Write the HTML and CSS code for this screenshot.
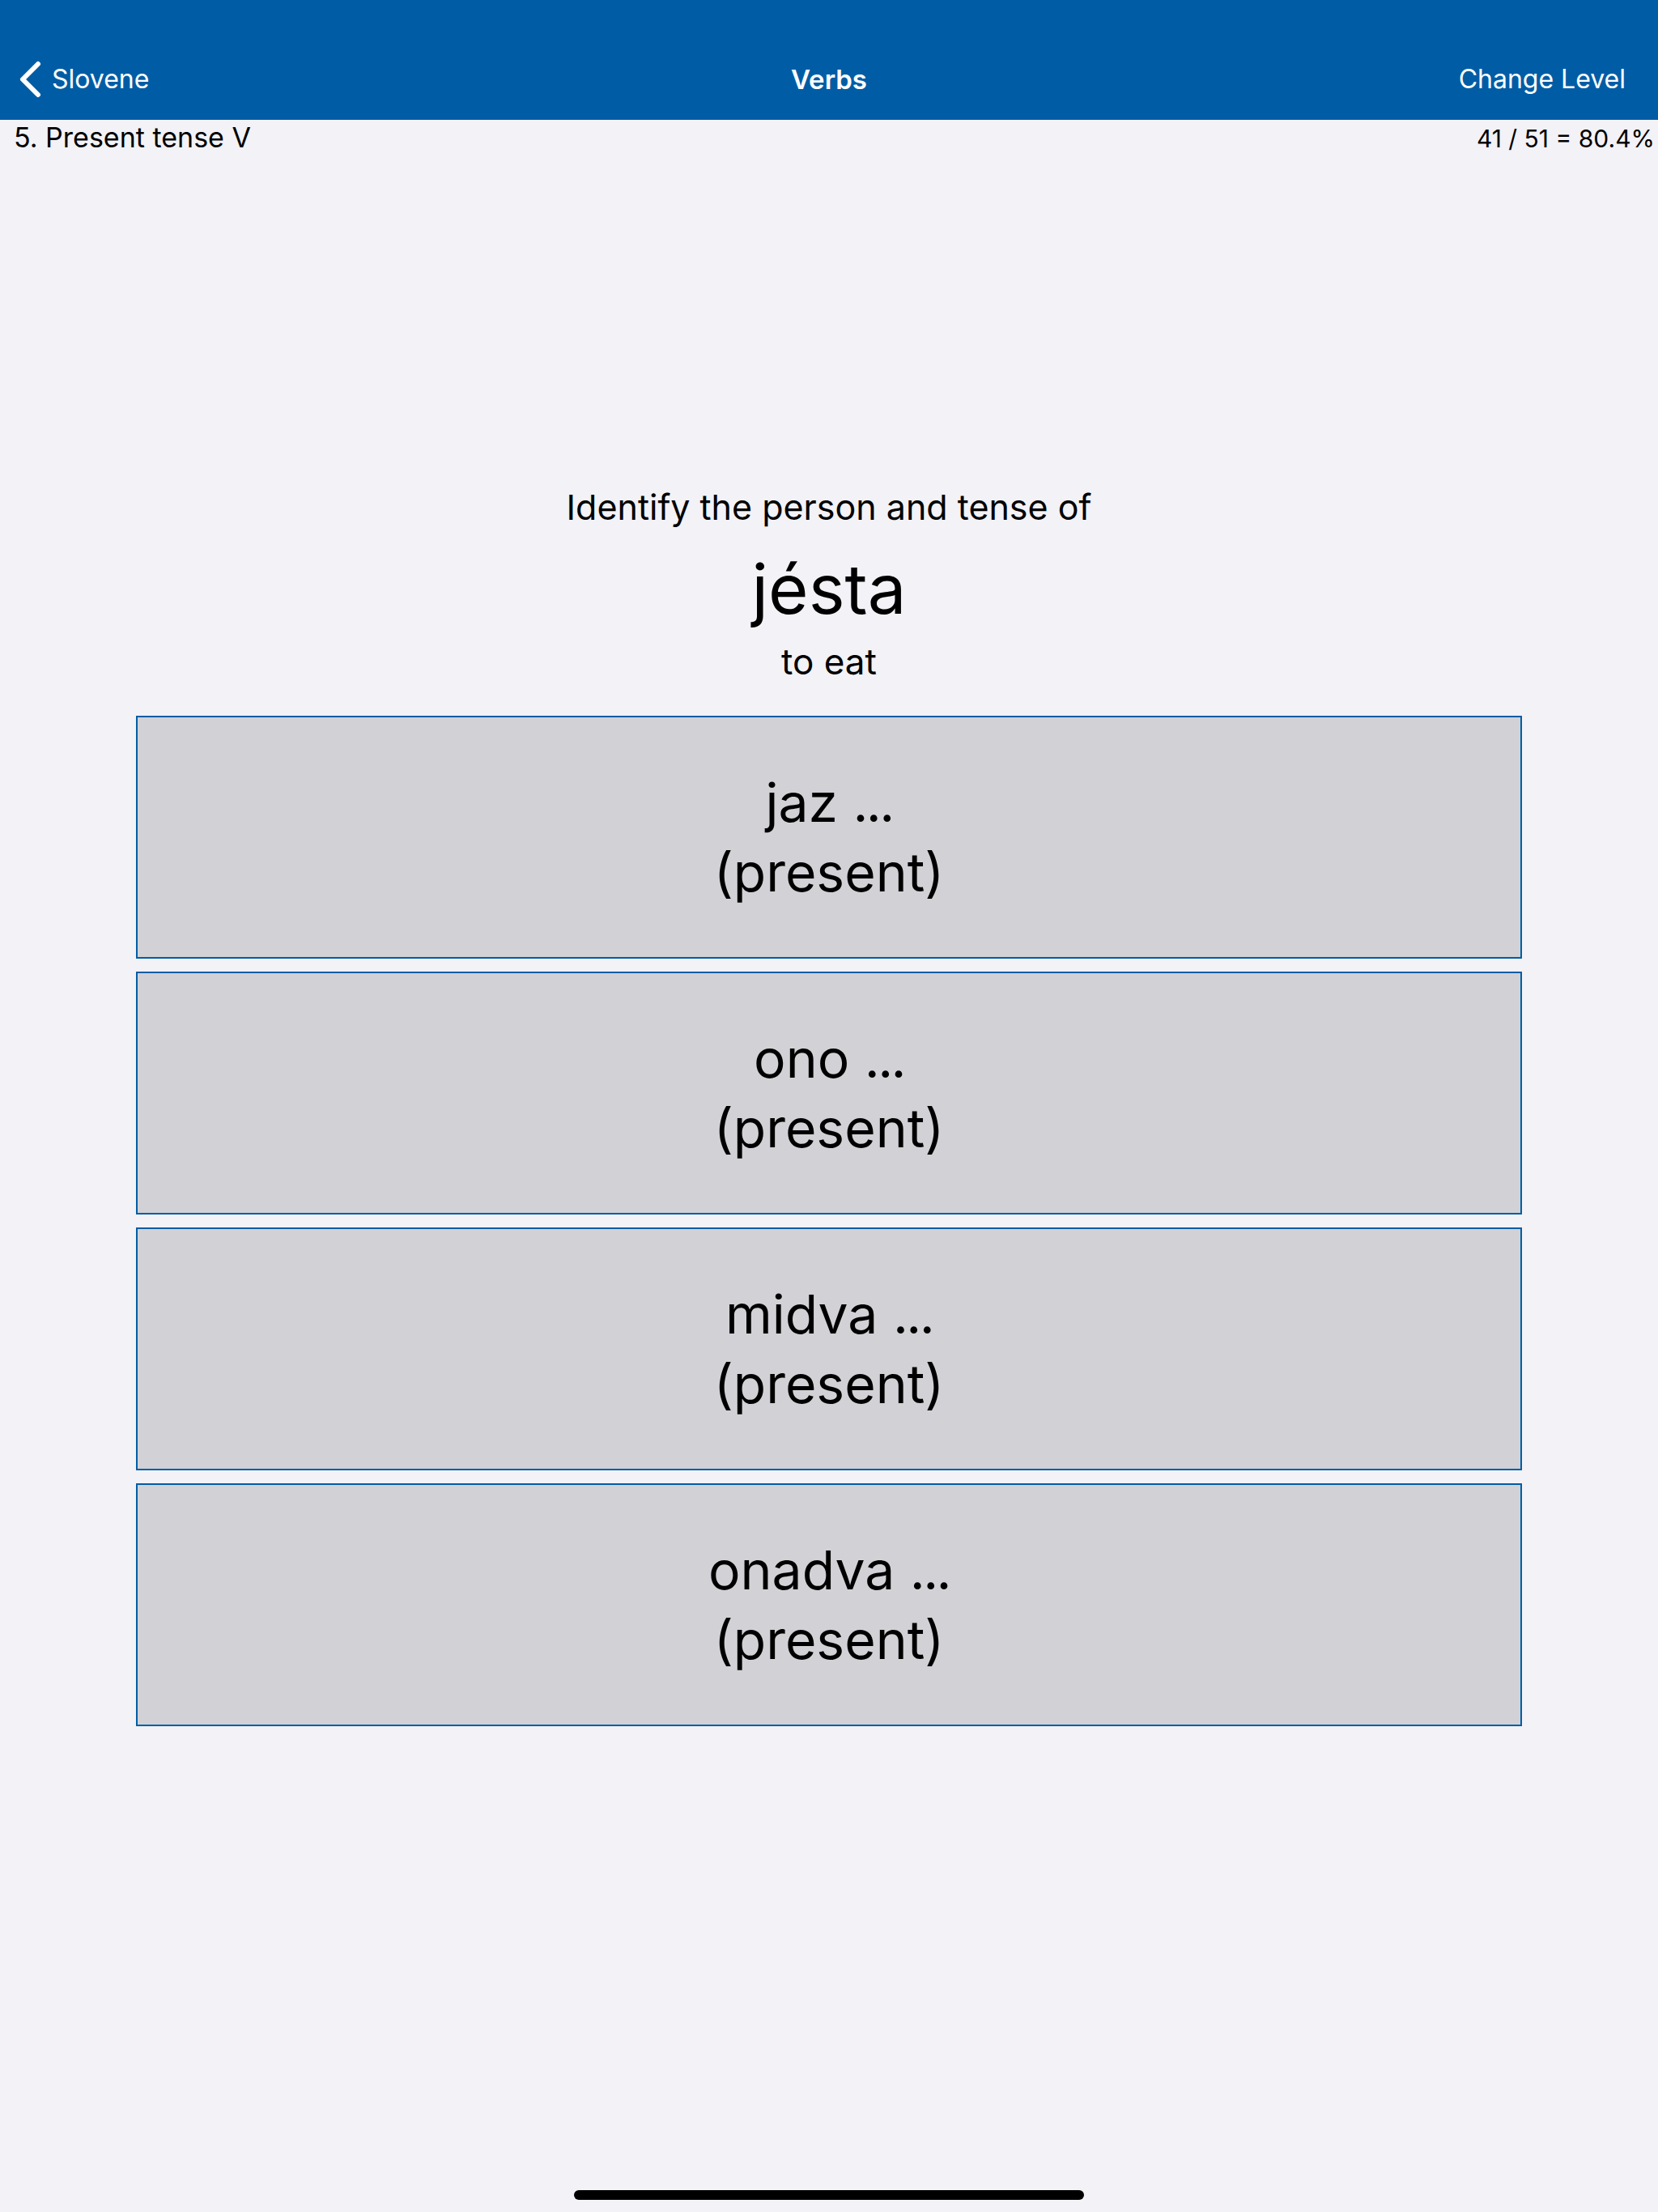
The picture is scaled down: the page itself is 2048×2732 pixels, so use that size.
FILE: index.html
```html
<!DOCTYPE html>
<html lang="en">
<head>
<meta charset="utf-8">
<title>Verbs</title>
<link rel="stylesheet" href="styles.css">
</head>
<body>
<div class="screen">
  <header class="navbar">
    <a class="nav-back" href="#">
      <svg class="chevron" viewBox="0 0 30 46" width="30" height="46" aria-hidden="true">
        <path d="M25 4 L6 23 L25 42" fill="none" stroke="#ffffff" stroke-width="6" stroke-linecap="round" stroke-linejoin="round"/>
      </svg>
      <span>Slovene</span>
    </a>
    <h1 class="nav-title">Verbs</h1>
    <a class="nav-action" href="#">Change Level</a>
  </header>
  <div class="status-row">
    <span class="level">5. Present tense V</span>
    <span class="score">41 / 51 = 80.4%</span>
  </div>
  <main class="quiz">
    <p class="prompt">Identify the person and tense of</p>
    <p class="word">jésta</p>
    <p class="meaning">to eat</p>
    <div class="options">
      <button class="option"><span>jaz <span class="dots">...</span></span><span>(present)</span></button>
      <button class="option"><span>ono <span class="dots">...</span></span><span>(present)</span></button>
      <button class="option"><span>midva <span class="dots">...</span></span><span>(present)</span></button>
      <button class="option"><span>onadva <span class="dots">...</span></span><span>(present)</span></button>
    </div>
  </main>
  <div class="home-indicator"></div>
</div>
</body>
</html>
```

FILE: styles.css
```css
* { box-sizing: border-box; }
html, body { margin: 0; padding: 0; }
body {
  background: #f2f2f7;
  font-family: Inter, "Noto Sans", "Liberation Sans", sans-serif;
  color: #000;
}
.screen {
  min-height: 2732px;
  display: flex;
  flex-direction: column;
}
.navbar {
  height: 148px;
  background: #005da5;
  display: grid;
  grid-template-columns: 1fr auto 1fr;
  align-items: start;
  padding-top: 78px;
  color: #fff;
  font-size: 32px;
  line-height: 40px;
}
.nav-back {
  display: flex;
  align-items: center;
  gap: 12px;
  padding-left: 22px;
  color: #fff;
  text-decoration: none;
  height: 40px;
}
.chevron { display: block; flex: none; }
.nav-title {
  margin: 0;
  font-size: 33px;
  line-height: 40px;
  font-weight: 600;
}
.nav-action {
  justify-self: end;
  padding-right: 40px;
  color: #fff;
  text-decoration: none;
}
.status-row {
  height: 42px;
  padding: 2px 4px 0 17px;
  display: flex;
  justify-content: space-between;
  align-items: baseline;
  line-height: 40px;
}
.level { font-size: 34px; }
.score { font-size: 30px; }
.quiz {
  flex: 1;
  padding: 410px 168px 0;
  text-align: center;
}
.prompt {
  margin: 0;
  font-size: 43px;
  line-height: 53px;
}
.word {
  margin: 25px 0 0;
  font-size: 85px;
  line-height: 100px;
}
.meaning {
  margin: 13px 0 0;
  font-size: 44px;
  line-height: 53px;
}
.options {
  margin-top: 40px;
  display: flex;
  flex-direction: column;
  gap: 16px;
}
.option {
  height: 300px;
  background: #d1d1d6;
  border: 2px solid #005da5;
  border-radius: 0;
  display: flex;
  flex-direction: column;
  align-items: center;
  justify-content: center;
  font-family: inherit;
  font-size: 66px;
  line-height: 86px;
  color: #000;
  padding: 0;
}
.dots { letter-spacing: -0.04em; }
.home-indicator {
  align-self: center;
  width: 630px;
  height: 12px;
  border-radius: 6px;
  background: #000;
  margin-bottom: 15px;
}
```
